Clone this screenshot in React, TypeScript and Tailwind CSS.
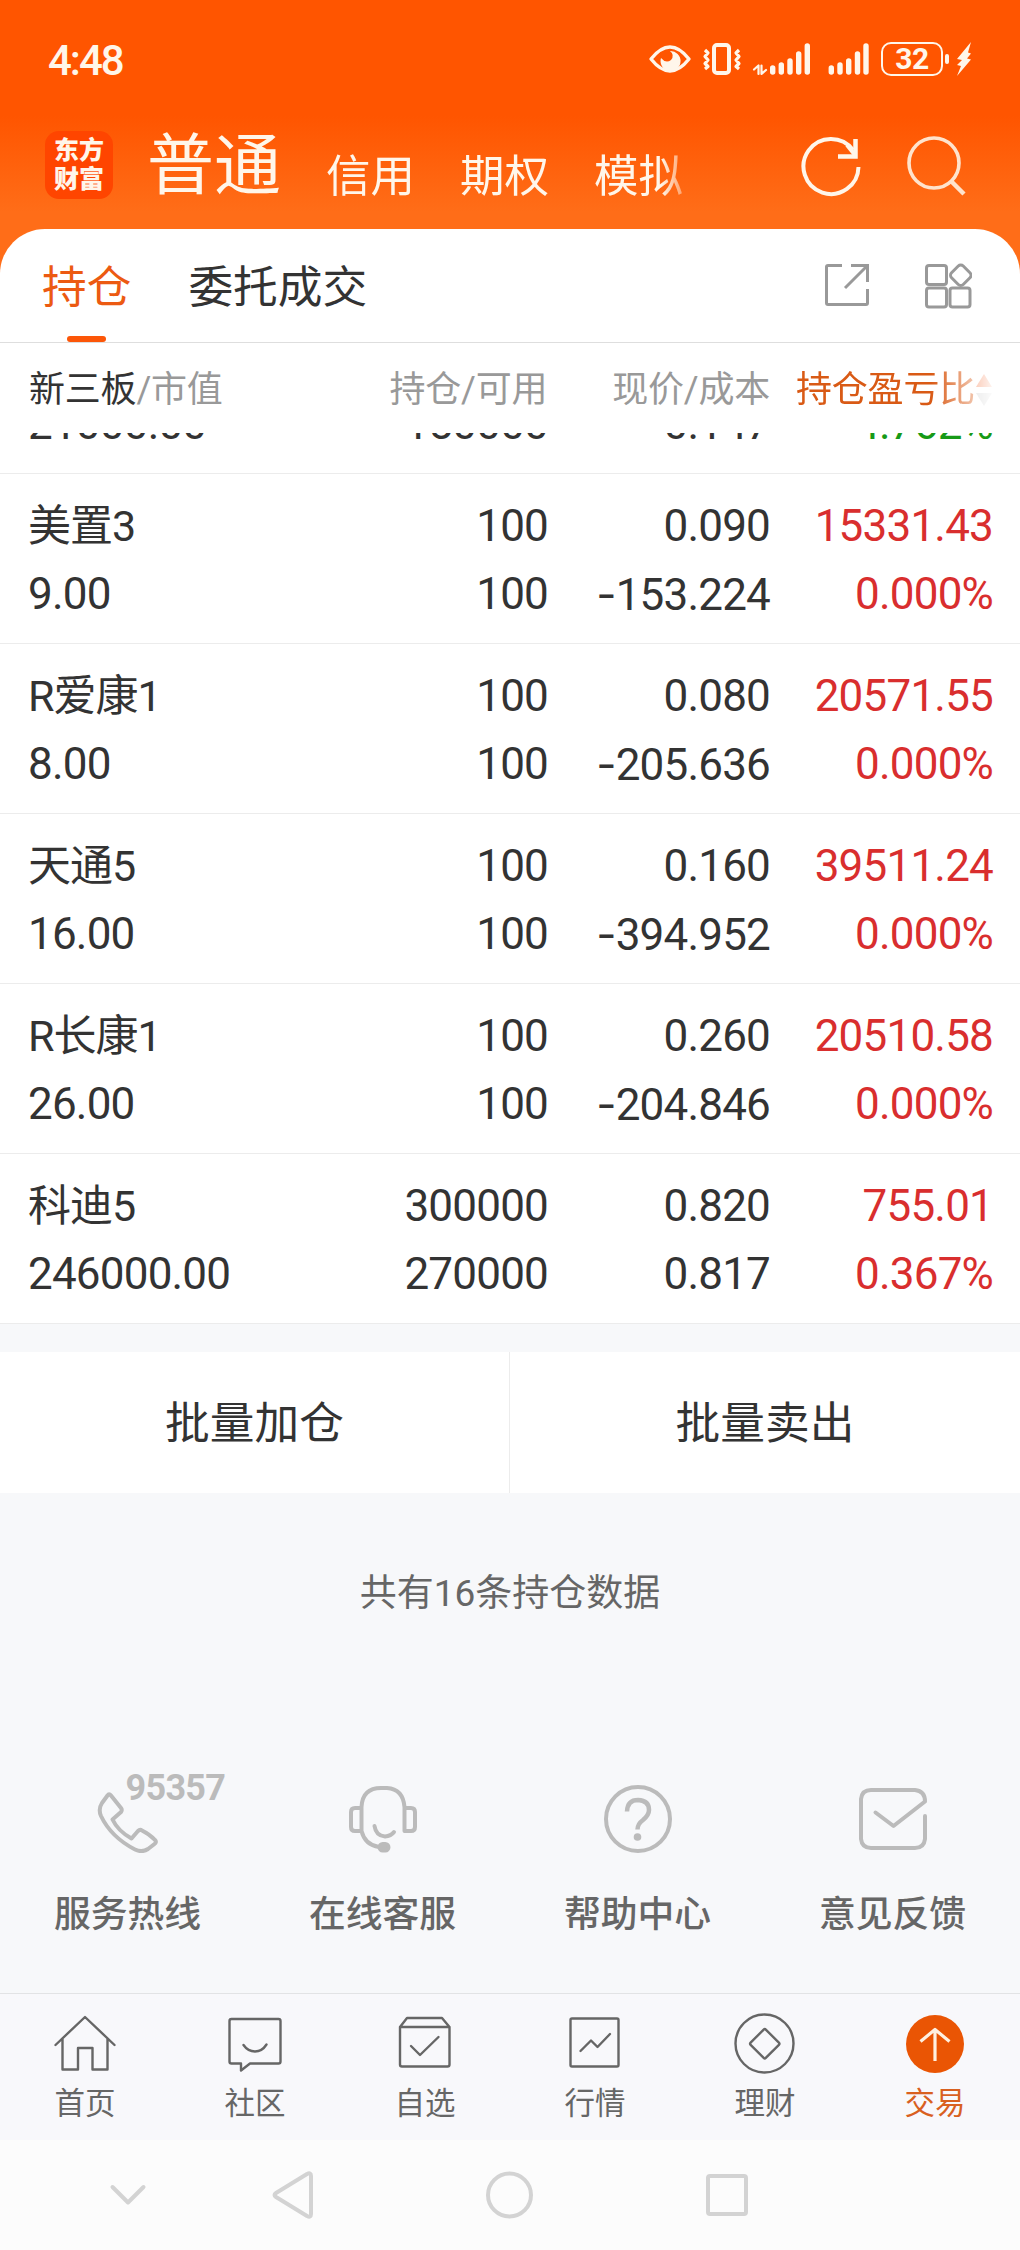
import type { ReactNode } from "react";

type Holding = {
  name: string;
  value: string;
  total: string;
  available: string;
  price: string;
  cost: string;
  profit: string;
  ratio: string;
  down?: boolean;
};

const holdings: Holding[] = [
  { name: "", value: "21000.00", total: "", available: "150000", price: "", cost: "0.147", profit: "", ratio: "-4.762%", down: true },
  { name: "美置3", value: "9.00", total: "100", available: "100", price: "0.090", cost: "-153.224", profit: "15331.43", ratio: "0.000%" },
  { name: "R爱康1", value: "8.00", total: "100", available: "100", price: "0.080", cost: "-205.636", profit: "20571.55", ratio: "0.000%" },
  { name: "天通5", value: "16.00", total: "100", available: "100", price: "0.160", cost: "-394.952", profit: "39511.24", ratio: "0.000%" },
  { name: "R长康1", value: "26.00", total: "100", available: "100", price: "0.260", cost: "-204.846", profit: "20510.58", ratio: "0.000%" },
  { name: "科迪5", value: "246000.00", total: "300000", available: "270000", price: "0.820", cost: "0.817", profit: "755.01", ratio: "0.367%" },
];

function StatusBar() {
  return (
    <div className="flex h-[116px] items-start justify-between pl-[48px] pr-[48px] pt-[41px] text-[#fff6ea]">
      <div className="text-[42px] font-medium leading-[39px] tracking-[-2px]">4:48</div>
      <div className="flex h-[36px] items-center">
        <svg width="226" height="36" viewBox="0 0 226 36" fill="none" stroke="currentColor" strokeLinecap="round" strokeLinejoin="round">
          <path d="M4 18 Q23 -6 42 18 Q23 42 4 18Z" strokeWidth="3.4" />
          <path d="M23 10 a10 10 0 1 1 -9 7 q5 6 10 2 q4 -5 -1 -9Z" fill="currentColor" stroke="none" />
          <rect x="67" y="4" width="15" height="28" rx="3" strokeWidth="4" />
          <path d="M58 9 l3 3 -3 3.5 3 3.5 -3 3.5 3 3 -3 2.5 M92 9 l-3 3 3 3.5 -3 3.5 3 3.5 -3 3 3 2.5" strokeWidth="3.2" strokeLinecap="butt" />
          <path d="M107 28.5 l4.5 -4 v8.5 M114.5 24.5 v8.5 l4.5 -4" strokeWidth="2.2" />
          <path d="M125.7 27 V31 M134.3 24 V31 M143 20 V31 M151.7 13 V31 M160.3 5 V31" strokeWidth="5.4" />
          <path d="M184.3 27 V31 M193 24 V31 M201.7 20 V31 M210.5 13 V31 M219 5 V31" strokeWidth="5.4" />
        </svg>
        <div className="ml-[8px] flex h-[34px] w-[62px] items-center justify-center rounded-[10px] border-2 border-current text-[30px] font-bold leading-none tracking-[-0.5px]">
          32
        </div>
        <div className="ml-[2px] h-[10px] w-[4px] rounded-full bg-current" />
        <svg className="ml-[7px]" width="16" height="36" viewBox="0 0 16 36" fill="currentColor">
          <path d="M15 1 L1 18 L6 19 L1 24 L5 25 L1 35 L15 18.5 L11 17.5 L15 12.5 L12 11.5 Z" />
        </svg>
      </div>
    </div>
  );
}

function Header() {
  return (
    <div className="flex h-[113px] pl-[45px] pr-[53px] text-[#fff6ea]">
      <div className="mt-[15px] flex h-[68px] w-[68px] flex-col items-center justify-center rounded-[14px] bg-[#ff4500] text-[25px] font-black leading-[29px]">
        <span>东方</span>
        <span>财富</span>
      </div>
      <div className="ml-[34px] mt-[8px] text-[67px] leading-[84px]">普通</div>
      <div className="ml-[45px] mt-[29px] flex gap-[45px] text-[44.5px] leading-[64px] [mask-image:linear-gradient(to_right,#000_335px,transparent_372px)]">
        <span>信用</span>
        <span>期权</span>
        <span>模拟</span>
      </div>
      <div className="ml-auto flex gap-[44px] pt-[16px]">
        <svg width="64" height="68" viewBox="0 0 64 68" fill="none" stroke="currentColor" strokeWidth="4">
          <path d="M59.5 35 A27.5 27.5 0 1 1 54 18" />
          <path d="M56.5 7 V24.5 H39" strokeWidth="4.5" />
          <path d="M48 13 L56 23" />
        </svg>
        <svg width="60" height="68" viewBox="0 0 60 68" fill="none" stroke="#ffe3cc" strokeWidth="3.6">
          <circle cx="27" cy="31" r="25" />
          <path d="M44 49 L57 62" strokeWidth="4.5" />
        </svg>
      </div>
    </div>
  );
}

function Tabs() {
  return (
    <div className="flex h-[114px] rounded-t-[45px] border-b border-[#dedede] bg-white pl-[42px] pr-[48px]">
      <div className="flex flex-col items-center">
        <span className="mt-[27px] text-[44.7px] leading-[64px] text-[#ec5a12]">持仓</span>
        <span className="mt-[16px] h-[6px] w-[39px] rounded-full bg-[#fc5608]" />
      </div>
      <div className="ml-[57px] mt-[27px] text-[44.7px] leading-[64px] text-[#333]">委托成交</div>
      <svg className="ml-auto mt-[34px]" width="46" height="46" viewBox="0 0 46 46" fill="none" stroke="#999" strokeWidth="3">
        <path d="M18 2.5 H4 Q2.5 2.5 2.5 4 V40 Q2.5 41.5 4 41.5 H42 Q43.5 41.5 43.5 40 V26" />
        <path d="M27 2.5 H43.5 V19" />
        <path d="M43 3 L21 25" />
      </svg>
      <svg className="ml-[54px] mt-[34px]" width="48" height="46" viewBox="0 0 48 46" fill="none" stroke="#999" strokeWidth="3">
        <rect x="2.5" y="2.5" width="20" height="19" rx="2.5" />
        <rect x="2.5" y="25" width="20" height="19" rx="2.5" />
        <rect x="26" y="25" width="20" height="19" rx="2.5" />
        <rect x="28.5" y="4" width="16.5" height="16.5" rx="3.5" transform="rotate(45 36.75 12.25)" />
      </svg>
    </div>
  );
}

function TableHead() {
  return (
    <div className="flex h-[90px] items-center bg-white pl-[29px] pr-[28px] pt-[3px] text-[36px] leading-[50px] tracking-[-0.2px] text-[#999]">
      <div className="w-[240px]">
        <span className="text-[#333]">新三板</span>/市值
      </div>
      <div className="w-[279px] text-right">持仓/可用</div>
      <div className="w-[223px] text-right">现价/成本</div>
      <div className="ml-[26px] flex flex-1 items-center whitespace-nowrap text-[#d95a15] [mask-image:linear-gradient(to_right,#000_135px,transparent_202px)]">
        <span>持仓盈亏比</span>
        <svg className="ml-[1px] shrink-0" width="16" height="34" viewBox="0 0 16 34">
          <path d="M8 1 L16 14 H0Z" fill="#f4703a" />
          <path d="M8 33 L16 20 H0Z" fill="#ccc" />
        </svg>
      </div>
    </div>
  );
}

function Cost({ value }: { value: string }) {
  if (!value.startsWith("-")) return <>{value}</>;
  return (
    <>
      <span className="font-[Inter]">-</span>
      {value.slice(1)}
    </>
  );
}

function HoldingRow({ item }: { item: Holding }) {
  const tone = item.down ? "text-[#179a17]" : "text-[#d92e2e]";
  return (
    <div className="flex h-[170px] shrink-0 border-b border-[#ececec] bg-white pl-[28px] pr-[27px] pt-[18px] text-[44px] leading-[68px] tracking-[-0.8px] text-[#333]">
      <div className="w-[240px]">
        <div className="h-[68px] text-[43px] tracking-[-1px]">{item.name}</div>
        <div className="h-[68px]">{item.value}</div>
      </div>
      <div className="w-[280px] text-right">
        <div className="h-[68px]">{item.total}</div>
        <div className="h-[68px]">{item.available}</div>
      </div>
      <div className="w-[222px] text-right">
        <div className="h-[68px]">{item.price}</div>
        <div className="h-[68px]"><Cost value={item.cost} /></div>
      </div>
      <div className={`flex-1 text-right ${tone}`}>
        <div className="h-[68px]">{item.profit}</div>
        <div className="h-[68px]">{item.ratio}</div>
      </div>
    </div>
  );
}

function Service({ label, badge, children }: { label: string; badge?: string; children: ReactNode }) {
  return (
    <div className="flex flex-1 flex-col items-center">
      <div className="relative h-[68px] w-[68px]">
        <svg width="68" height="68" viewBox="0 0 68 68" fill="none" stroke="#bbb" strokeWidth="4" strokeLinecap="round" strokeLinejoin="round">
          {children}
        </svg>
        {badge && (
          <span className="absolute left-[32px] top-[-15px] text-[36px] font-bold leading-[36px] tracking-[-0.7px] text-[#bbb]">{badge}</span>
        )}
      </div>
      <div className="mt-[32px] text-[36.8px] font-medium leading-[60px] text-[#666]">{label}</div>
    </div>
  );
}

function NavItem({ label, active, children }: { label: string; active?: boolean; children: ReactNode }) {
  return (
    <div className="flex flex-1 flex-col items-center pt-[18px]">
      <svg width="64" height="64" viewBox="0 0 64 64" fill="none" stroke="#666" strokeWidth="2.4" strokeLinecap="round" strokeLinejoin="round">
        {children}
      </svg>
      <div className={`mt-[7px] text-[30.5px] leading-[42px] ${active ? "text-[#d9601f]" : "text-[#666]"}`}>{label}</div>
    </div>
  );
}

function SystemNav() {
  return (
    <div className="flex h-[110px] items-center bg-[#fcfcfc] pl-[104px]">
      <svg width="48" height="48" viewBox="0 0 48 48" fill="none" stroke="#d3d3d3" strokeWidth="4" strokeLinecap="round" strokeLinejoin="round">
        <path d="M8.5 16 L24 31.5 L39.5 16" />
      </svg>
      <svg className="ml-[118px]" width="48" height="48" viewBox="0 0 48 48" fill="none" stroke="#d3d3d3" strokeWidth="4" strokeLinejoin="round">
        <path d="M37 3 Q41 1 41 5 V43 Q41 47 37 45 L6 26 Q3 24 6 22 Z" />
      </svg>
      <svg className="ml-[168px]" width="48" height="48" viewBox="0 0 48 48" fill="none" stroke="#d3d3d3" strokeWidth="4">
        <circle cx="23.5" cy="24" r="21.5" />
      </svg>
      <svg className="ml-[169px]" width="48" height="48" viewBox="0 0 48 48" fill="none" stroke="#d3d3d3" strokeWidth="4">
        <rect x="5" y="5" width="38" height="38" rx="2" />
      </svg>
    </div>
  );
}

export default function App() {
  return (
    <div className="flex h-[2250px] w-[1020px] flex-col overflow-hidden bg-[#f7f8fa] font-[Roboto,'Noto_Sans_CJK_SC',sans-serif]">
      <div className="bg-[linear-gradient(#ff5500_116px,#ff6d18_212px)]">
        <StatusBar />
        <Header />
        <Tabs />
      </div>
      <TableHead />

      {/* scrolled list, pinned to its last row */}
      <div className="flex h-[891px] flex-col justify-end overflow-hidden">
        {holdings.map((item, i) => (
          <HoldingRow key={i} item={item} />
        ))}
      </div>

      <div className="mt-[28px] flex h-[141px] bg-white text-[44.7px] leading-[144px] text-[#333]">
        <div className="w-[510px] border-r border-[#ececec] text-center">批量加仓</div>
        <div className="flex-1 text-center">批量卖出</div>
      </div>

      <div className="h-[200px] text-center text-[37px] leading-[202px] text-[#666]">共有16条持仓数据</div>

      <div className="flex h-[300px] pt-[92px]">
        <Service label="服务热线" badge="95357">
          <path d="M13.5 10.5 Q15 8 17 10.5 L27 23 Q28.5 25 27 27 L18.5 34.5 Q24 46 37.5 53.5 L44 46 Q46 44 48 45.5 Q56 49.5 61 55 Q63 57 60.5 59 L54 64 Q48 68 41 64.5 Q17 52 7 31 Q4 24 8 18 Z" />
        </Service>
        <Service label="在线客服">
          <path d="M12.5 46 V22 Q13.5 3 32 3 H38 Q54 4 55.5 22 V46 H62 Q66 46 66 42 V27 Q66 23 62 23 H56 M12 23 H6 Q2 23 2 27 V42 Q2 46 6 46 H12.5 Q16 60 30 62" />
          <path d="M25.5 41 Q27 51 36 51.5 Q42 51 45 47" />
          <rect x="30.5" y="59" width="9" height="6.5" rx="3.2" fill="#bbb" />
        </Service>
        <Service label="帮助中心">
          <circle cx="34" cy="34" r="32" />
          <path d="M23 26.5 Q23.5 15 34 15 Q45 15.5 45 25 Q45 30 39 35 Q33.5 39 33.5 44.5" strokeWidth="4.5" strokeLinecap="butt" />
          <circle cx="33.5" cy="52" r="3.8" fill="#bbb" stroke="none" />
        </Service>
        <Service label="意见反馈">
          <path d="M66 31 V54 Q65 63 56 63 H12 Q3 63 2 54 V14 Q3 5 12 5 H56 Q66 6 66 16.5 L34.5 41 L16.5 27.5" />
        </Service>
      </div>

      <div className="flex h-[147px] border-t border-[#e2e3e5] bg-[#f8f8fb]">
        <NavItem label="首页">
          <path d="M2.5 33 L32 5 L61.5 33 M9.5 27 V57.5 H25 V36 H39.5 V57.5 H54.5 V27" />
        </NavItem>
        <NavItem label="社区">
          <path d="M8.5 7 H55.5 Q57.5 7 57.5 9 V49.5 Q57.5 51.5 55.5 51.5 H27 L18 58.5 V51.5 H8.5 Q6.5 51.5 6.5 49.5 V9 Q6.5 7 8.5 7Z" />
          <path d="M20.5 33 Q25 39.5 32 39.5 Q39 39.5 43.5 32.5" />
        </NavItem>
        <NavItem label="自选">
          <path d="M7 15 L14 6 H49 L56.5 15 V52.5 Q56.5 54.5 54.5 54.5 H9 Q7 54.5 7 52.5 Z H56.5" />
          <path d="M18 34 L27 43 L45.5 25" />
        </NavItem>
        <NavItem label="行情">
          <rect x="7.5" y="6.5" width="48" height="48" rx="1.5" />
          <path d="M17.5 39 L28 28.5 L34.5 35 L47 22" />
        </NavItem>
        <NavItem label="理财">
          <circle cx="31.5" cy="31.5" r="29" />
          <rect x="21" y="21" width="21.5" height="21.5" rx="1.5" transform="rotate(45 31.75 31.75)" />
        </NavItem>
        <NavItem label="交易" active>
          <circle cx="32" cy="32" r="29" fill="#ea5504" stroke="none" />
          <path d="M32 49 V17.5 M17.5 29.5 L32 17.5 L46.5 29.5" stroke="#fff0e0" strokeWidth="3.2" strokeLinecap="butt" />
        </NavItem>
      </div>

      <SystemNav />
    </div>
  );
}
